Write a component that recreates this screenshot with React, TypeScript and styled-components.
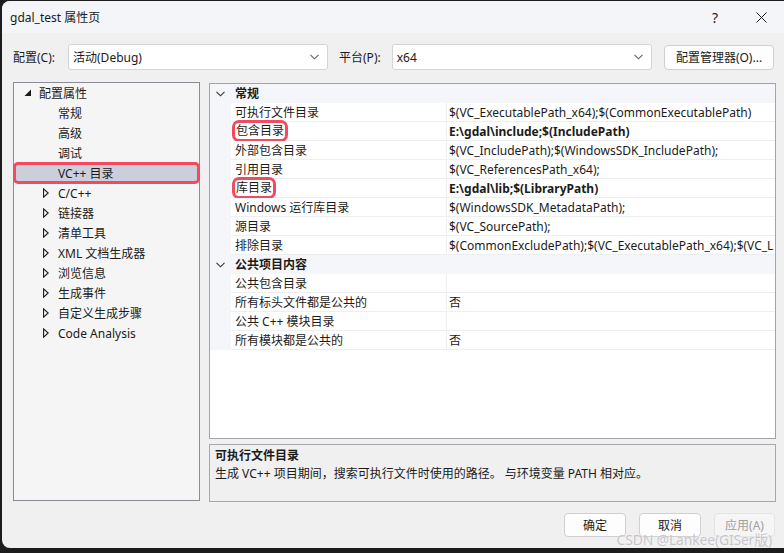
import React from "react";
import styled, { createGlobalStyle } from "styled-components";

const GlobalStyle = createGlobalStyle`
  html, body {
    margin: 0;
    padding: 0;
    background: #1c1c1c;
  }
  body {
    font-family: "Noto Sans", "Noto Sans CJK SC", sans-serif;
    font-size: 12px;
    color: #1b1b1b;
  }
`;

const Window = styled.div`
  position: relative;
  margin: 1px 0 0 2px;
  width: 782px;
  height: 547px;
  background: #f0f0f0;
  border-radius: 8px 0 0 8px;
  overflow: hidden;
  display: flex;
  flex-direction: column;
`;

const TitleBar = styled.div`
  height: 32px;
  flex-shrink: 0;
  background: #f3f5f9;
  display: flex;
  align-items: center;
  padding-left: 8px;
`;

const TitleText = styled.div`
  font-size: 12px;
  flex: 1;
`;

const TitleButton = styled.div`
  width: 46px;
  height: 32px;
  display: flex;
  align-items: center;
  justify-content: center;
  font-size: 14px;
  color: #1b1b1b;
`;

const Toolbar = styled.div`
  display: flex;
  align-items: center;
  height: 26px;
  padding: 11px 10px 0 11px;
`;

const Label = styled.span<{ $gap: number }>`
  margin-right: ${(p) => p.$gap}px;
  white-space: nowrap;
`;

const Select = styled.div<{ $width: number }>`
  box-sizing: border-box;
  width: ${(p) => p.$width}px;
  height: 26px;
  background: #ffffff;
  border: 1px solid #d4d4d4;
  border-radius: 3px;
  display: flex;
  align-items: center;
  padding: 0 8px 0 4px;
  margin-right: 11px;
`;

const SelectValue = styled.span`
  flex: 1;
`;

const Button = styled.div<{ $width: number; $disabled?: boolean }>`
  box-sizing: border-box;
  width: ${(p) => p.$width}px;
  height: 24px;
  background: ${(p) => (p.$disabled ? "#f5f5f5" : "#fdfdfd")};
  border: 1px solid ${(p) => (p.$disabled ? "#e4e4e4" : "#d0d0d0")};
  border-radius: 4px;
  display: flex;
  align-items: center;
  justify-content: center;
  color: ${(p) => (p.$disabled ? "#a0a0a0" : "#1b1b1b")};
`;

const ManagerButton = styled(Button)`
  margin-left: auto;
  height: 25px;
`;

const Main = styled.div`
  display: flex;
  gap: 9px;
  margin-top: 12px;
  padding: 0 8px 0 11px;
  height: 420px;
`;

const TreePanel = styled.div`
  box-sizing: border-box;
  width: 187px;
  height: 419px;
  background: #f5f5f5;
  border: 1px solid #8c8c98;
`;

const TreeRow = styled.div<{ $level: number; $selected?: boolean }>`
  height: 20px;
  display: flex;
  align-items: center;
  padding-left: ${(p) => (p.$level === 0 ? 10 : 29)}px;
  background: ${(p) => (p.$selected ? "#cbcfdb" : "transparent")};
  ${(p) =>
    p.$selected
      ? `outline: 3px solid #f24a5e; outline-offset: -2px; border-radius: 4px;`
      : ""}
`;

const ArrowSlot = styled.span`
  width: 15px;
  display: flex;
  align-items: center;
`;

const RightColumn = styled.div`
  width: 567px;
  display: flex;
  flex-direction: column;
  gap: 5px;
  margin-top: 1px;
`;

const GridPanel = styled.div`
  box-sizing: border-box;
  height: 356px;
  background: #ffffff;
  border: 1px solid #a3a3ab;
`;

const GridRow = styled.div<{ $header?: boolean }>`
  height: 19px;
  display: grid;
  grid-template-columns: 21px 216px 1fr;
  background: #f4f6f9;
  font-weight: ${(p) => (p.$header ? 700 : 400)};
`;

const Strip = styled.div`
  display: flex;
  align-items: center;
  padding-left: 6px;
`;

const NameCell = styled.div<{ $header?: boolean }>`
  display: flex;
  align-items: center;
  padding-left: 4px;
  background: ${(p) => (p.$header ? "transparent" : "#ffffff")};
  border-bottom: 1px solid ${(p) => (p.$header ? "transparent" : "#eceef2")};
  border-right: 1px solid ${(p) => (p.$header ? "transparent" : "#eceef2")};
  white-space: nowrap;
`;

const ValueCell = styled.div<{ $header?: boolean; $bold?: boolean }>`
  display: flex;
  align-items: center;
  padding-left: 2px;
  background: ${(p) => (p.$header ? "transparent" : "#ffffff")};
  border-bottom: 1px solid ${(p) => (p.$header ? "transparent" : "#eceef2")};
  font-weight: ${(p) => (p.$bold ? 700 : 400)};
  white-space: nowrap;
  overflow: hidden;
`;

const Marked = styled.span`
  display: inline-block;
  line-height: 14px;
  padding: 1px 1px;
  outline: 3px solid #f24a5e;
  outline-offset: 0px;
  border-radius: 4px;
`;

const DescPanel = styled.div`
  box-sizing: border-box;
  height: 58px;
  border: 1px solid #a8a8a8;
  padding: 2px 5px;
  line-height: 18px;
`;

const DescTitle = styled.div`
  font-weight: 700;
`;

const Footer = styled.div`
  display: flex;
  justify-content: flex-end;
  gap: 13px;
  padding: 11px 9px 0 0;
`;

const Watermark = styled.div`
  position: absolute;
  right: 12px;
  bottom: -1px;
  font-size: 14px;
  color: rgba(140, 140, 150, 0.5);
  text-shadow: 0 0 1px #ffffff;
  letter-spacing: -0.2px;
  pointer-events: none;
`;

const Chevron = ({ color = "#606060" }: { color?: string }) => (
  <svg width="9" height="6" viewBox="0 0 9 6">
    <path d="M0.5 0.8 L4.5 4.8 L8.5 0.8" fill="none" stroke={color} strokeWidth="1.1" />
  </svg>
);

const Expanded = () => (
  <svg width="8" height="8" viewBox="0 0 8 8">
    <polygon points="7,0.5 7,7 0.5,7" fill="#1b1b1b" />
  </svg>
);

const Collapsed = () => (
  <svg width="6" height="10" viewBox="0 0 6 10">
    <polygon points="0.6,0.8 5.2,5 0.6,9.2" fill="none" stroke="#1b1b1b" strokeWidth="1.1" />
  </svg>
);

const CloseIcon = () => (
  <svg width="11" height="11" viewBox="0 0 11 11">
    <path d="M0.5 0.5 L10.5 10.5 M10.5 0.5 L0.5 10.5" stroke="#1b1b1b" strokeWidth="1" />
  </svg>
);

type TreeItem = { label: string; level: number; arrow?: "open" | "closed"; selected?: boolean };

const treeItems: TreeItem[] = [
  { label: "配置属性", level: 0, arrow: "open" },
  { label: "常规", level: 1 },
  { label: "高级", level: 1 },
  { label: "调试", level: 1 },
  { label: "VC++ 目录", level: 1, selected: true },
  { label: "C/C++", level: 1, arrow: "closed" },
  { label: "链接器", level: 1, arrow: "closed" },
  { label: "清单工具", level: 1, arrow: "closed" },
  { label: "XML 文档生成器", level: 1, arrow: "closed" },
  { label: "浏览信息", level: 1, arrow: "closed" },
  { label: "生成事件", level: 1, arrow: "closed" },
  { label: "自定义生成步骤", level: 1, arrow: "closed" },
  { label: "Code Analysis", level: 1, arrow: "closed" },
];

type GridItem =
  | { kind: "header"; label: string }
  | { kind: "prop"; name: string; value: string; bold?: boolean; marked?: boolean };

const gridItems: GridItem[] = [
  { kind: "header", label: "常规" },
  { kind: "prop", name: "可执行文件目录", value: "$(VC_ExecutablePath_x64);$(CommonExecutablePath)" },
  { kind: "prop", name: "包含目录", value: "E:\\gdal\\include;$(IncludePath)", bold: true, marked: true },
  { kind: "prop", name: "外部包含目录", value: "$(VC_IncludePath);$(WindowsSDK_IncludePath);" },
  { kind: "prop", name: "引用目录", value: "$(VC_ReferencesPath_x64);" },
  { kind: "prop", name: "库目录", value: "E:\\gdal\\lib;$(LibraryPath)", bold: true, marked: true },
  { kind: "prop", name: "Windows 运行库目录", value: "$(WindowsSDK_MetadataPath);" },
  { kind: "prop", name: "源目录", value: "$(VC_SourcePath);" },
  { kind: "prop", name: "排除目录", value: "$(CommonExcludePath);$(VC_ExecutablePath_x64);$(VC_L" },
  { kind: "header", label: "公共项目内容" },
  { kind: "prop", name: "公共包含目录", value: "" },
  { kind: "prop", name: "所有标头文件都是公共的", value: "否" },
  { kind: "prop", name: "公共 C++ 模块目录", value: "" },
  { kind: "prop", name: "所有模块都是公共的", value: "否" },
];

export default function App() {
  return (
    <>
      <GlobalStyle />
      <Window>
        <TitleBar>
          <TitleText>gdal_test 属性页</TitleText>
          <TitleButton>?</TitleButton>
          <TitleButton>
            <CloseIcon />
          </TitleButton>
        </TitleBar>

        <Toolbar>
          <Label $gap={13}>配置(C):</Label>
          <Select $width={260}>
            <SelectValue>活动(Debug)</SelectValue>
            <Chevron />
          </Select>
          <Label $gap={11}>平台(P):</Label>
          <Select $width={260}>
            <SelectValue>x64</SelectValue>
            <Chevron />
          </Select>
          <ManagerButton $width={110}>配置管理器(O)...</ManagerButton>
        </Toolbar>

        <Main>
          <TreePanel>
            {treeItems.map((t) => (
              <TreeRow key={t.label} $level={t.level} $selected={t.selected}>
                <ArrowSlot>
                  {t.arrow === "open" && <Expanded />}
                  {t.arrow === "closed" && <Collapsed />}
                </ArrowSlot>
                <span>{t.label}</span>
              </TreeRow>
            ))}
          </TreePanel>

          <RightColumn>
            <GridPanel>
              {gridItems.map((g, i) =>
                g.kind === "header" ? (
                  <GridRow key={i} $header>
                    <Strip>
                      <Chevron color="#333333" />
                    </Strip>
                    <NameCell $header>{g.label}</NameCell>
                    <ValueCell $header />
                  </GridRow>
                ) : (
                  <GridRow key={i}>
                    <Strip />
                    <NameCell>{g.marked ? <Marked>{g.name}</Marked> : g.name}</NameCell>
                    <ValueCell $bold={g.bold}>{g.value}</ValueCell>
                  </GridRow>
                )
              )}
            </GridPanel>
            <DescPanel>
              <DescTitle>可执行文件目录</DescTitle>
              <div>生成 VC++ 项目期间，搜索可执行文件时使用的路径。 与环境变量 PATH 相对应。</div>
            </DescPanel>
          </RightColumn>
        </Main>

        <Footer>
          <Button $width={62}>确定</Button>
          <Button $width={62}>取消</Button>
          <Button $width={61} $disabled>
            应用(A)
          </Button>
        </Footer>
        <Watermark>CSDN @Lankee(GISer版)</Watermark>
      </Window>
    </>
  );
}
